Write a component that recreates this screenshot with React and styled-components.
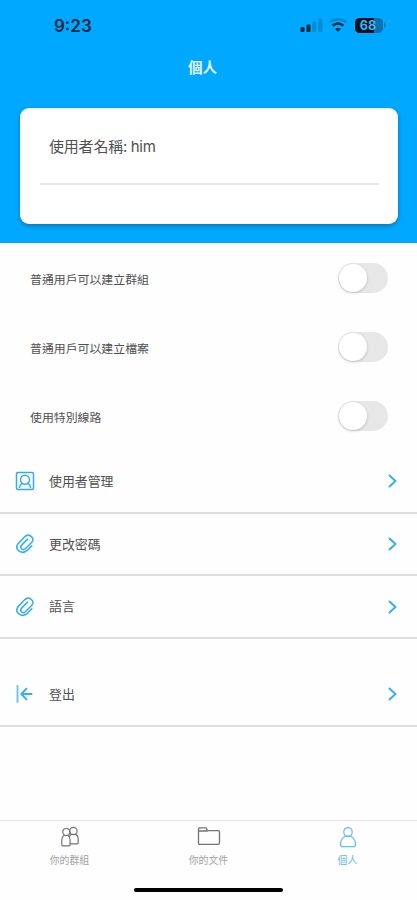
import React, { useState } from "react";
import styled, { createGlobalStyle } from "styled-components";

const GlobalStyle = createGlobalStyle`
  * {
    box-sizing: border-box;
  }
  body {
    margin: 0;
    background: #fefefe;
    font-family: Inter, "Noto Sans CJK TC", sans-serif;
    color: #505050;
  }
`;

const Screen = styled.div`
  display: flex;
  flex-direction: column;
  width: 417px;
  height: 900px;
  overflow: hidden;
`;

const Header = styled.header`
  display: flex;
  flex-direction: column;
  height: 243px;
  background: #00a9ff;
`;

const StatusBar = styled.div`
  display: flex;
  align-items: center;
  justify-content: space-between;
  height: 50px;
  padding: 0 30px 0 54px;
`;

const Clock = styled.span`
  color: #06283f;
  font-size: 17px;
  font-weight: 600;
  line-height: 20px;
  padding-top: 1px;
`;

const StatusIcons = styled.div`
  display: flex;
  align-items: center;
`;

const Title = styled.h1`
  margin: 0;
  padding: 1px 12px 0 0;
  height: 34px;
  line-height: 34px;
  color: #e6f6ff;
  font-size: 14.5px;
  font-weight: 700;
  text-align: center;
`;

const Card = styled.section`
  height: 116px;
  margin: 24px 19px 0 20px;
  padding: 0 20px;
  background: #fff;
  border-radius: 9px;
  box-shadow: 0 2px 4px rgba(30, 70, 110, 0.5);
`;

const UserName = styled.p`
  margin: 0;
  height: 77px;
  padding: 0 9px;
  line-height: 78px;
  border-bottom: 2px solid #e6e6e6;
  font-size: 15px;
  letter-spacing: -0.2px;
  word-spacing: -0.5px;
`;

const Settings = styled.section`
  display: flex;
  flex-direction: column;
`;

const SettingRow = styled.div`
  display: flex;
  align-items: center;
  justify-content: space-between;
  height: 69px;
  padding: 2px 29px 0 30px;
  font-size: 11.9px;
`;

const Switch = styled.button`
  width: 50px;
  height: 30px;
  margin-bottom: 1px;
  padding: 1px;
  border: 0;
  border-radius: 15px;
  background: ${(props) => (props.$on ? "#00a9ff" : "#e7e7e7")};
`;

const Knob = styled.span`
  display: block;
  width: 28px;
  height: 28px;
  margin-left: ${(props) => (props.$on ? "20px" : "0")};
  border-radius: 50%;
  background: #fff;
  box-shadow: 0 1px 3px rgba(0, 0, 0, 0.2);
`;

const MenuRow = styled.div`
  display: flex;
  align-items: center;
  height: ${(props) => props.$height || 62}px;
  margin-top: ${(props) => props.$gap || 0}px;
  padding: 0 19px 0 15px;
  border-bottom: 2px solid #dedede;
  font-size: 12.9px;
`;

const MenuLabel = styled.span`
  flex: 1;
  margin-left: 14px;
  padding-top: 1px;
  line-height: 20px;
`;

const TabBar = styled.nav`
  display: flex;
  height: 60px;
  margin-top: auto;
  border-top: 1px solid #e5e5e5;
`;

const Tab = styled.div`
  flex: 1;
  display: flex;
  flex-direction: column;
  align-items: center;
  padding-top: 5px;
  color: ${(props) => (props.$active ? "#62b6f5" : "#a3a3a3")};
  font-size: 9.9px;
  line-height: 14px;

  svg {
    margin-bottom: 5px;
    color: ${(props) => (props.$active ? "#6cbcf8" : "#737373")};
  }
`;

const HomeArea = styled.div`
  display: flex;
  justify-content: center;
  height: 20px;
  padding-top: 8px;
`;

const HomeIndicator = styled.div`
  width: 149px;
  height: 4px;
  border-radius: 2px;
  background: #000;
`;

const Battery = styled.span`
  display: flex;
  align-items: center;
  justify-content: center;
  width: 28px;
  height: 15px;
  margin-left: 7px;
  padding-right: 2px;
  border-radius: 4.5px;
  background: linear-gradient(90deg, #03121d 68%, #0874ae 68%);
  color: #43b5f3;
  font-size: 12.5px;
  font-weight: 700;
  line-height: 15px;
`;

const lineProps = {
  fill: "none",
  stroke: "currentColor",
  strokeLinecap: "round",
  strokeLinejoin: "round"
};

function SignalIcon() {
  return (
    <svg width="23" height="16" viewBox="0 0 23 16">
      <rect x="0.5" y="10" width="4" height="5" rx="1" fill="#04263b" />
      <rect x="6.5" y="7.5" width="4" height="7.5" rx="1" fill="#04263b" />
      <rect x="12.3" y="4.5" width="4" height="10.5" rx="1" fill="#078bd0" />
      <rect x="18.3" y="1.5" width="4" height="13.5" rx="1" fill="#078bd0" />
    </svg>
  );
}

function WifiIcon() {
  return (
    <svg width="20" height="16" viewBox="-1 0 20 16" style={{ marginLeft: 5 }}>
      <path d="M.6 5.4C5 1.2 13 1.2 17.4 5.4" fill="none" stroke="#078bd0" strokeWidth="2.4" />
      <path d="M3.7 8.600C6.700 5.700 11.300 5.700 14.300 8.600" fill="none" stroke="#04263b" strokeWidth="2.500" />
      <path d="M6.200 12C7.800 10.500 10.200 10.500 11.800 12L9 14.800Z" fill="#04263b" />
    </svg>
  );
}

function BatteryTip() {
  return (
    <svg width="3" height="6" viewBox="0 0 3 6" style={{ marginLeft: 1 }}>
      <path d="M0 .5C2.700 1 2.700 5 0 5.500Z" fill="#0879b8" />
    </svg>
  );
}

function UserFrameIcon() {
  return (
    <svg width="20" height="20" viewBox="0 0 20 20" color="#30adf5" strokeWidth="1.500" {...lineProps}>
      <rect x="1.500" y="1.500" width="17" height="17" rx="1.500" />
      <circle cx="10" cy="8.700" r="4.500" />
      <path d="M4.500 16.500c.3-2.200 1.200-3.500 2.800-4.300M15.500 16.500c-.3-2.200-1.200-3.500-2.800-4.300" />
    </svg>
  );
}

function ClipIcon() {
  return (
    <svg width="20" height="20" viewBox="0 0 20 20" color="#35aef4" strokeWidth="1.600" {...lineProps}>
      <path d="M16.800 11.800L12.700 16C7.200 21.500-1.400 15.700 3 9.700L9.400 3C13.600-1.200 20.900 3.500 16.600 8.500L10.600 14.500C7.400 17.200 4.200 13.700 6.800 10.900L12.500 5.200" />
    </svg>
  );
}

function LogoutIcon() {
  return (
    <svg width="20" height="20" viewBox="0 0 20 20" color="#30adf5" strokeWidth="1.900" {...lineProps}>
      <path d="M2.500 2v16" stroke="#72c5f8" strokeWidth="2" />
      <path d="M16.500 10H6.500M11.500 4.700L6.300 10l5.200 5.300" />
    </svg>
  );
}

function ChevronIcon() {
  return (
    <svg width="11" height="16" viewBox="0 0 11 16" color="#30adf5" strokeWidth="1.900" {...lineProps}>
      <path d="M2.500 2.500L8.500 8l-6 5.500" />
    </svg>
  );
}

function GroupIcon() {
  return (
    <svg width="22" height="22" viewBox="0 0 22 22" strokeWidth="1.200" {...lineProps}>
      <circle cx="7.300" cy="6" r="3.500" />
      <circle cx="14.400" cy="5" r="3.700" />
      <path d="M5 9.500C3.500 10.300 2.800 11.800 2.800 14v4.800q0 1 1 1h6.300q1 0 1-1V14c0-2.200-.7-3.700-2.200-4.500z" />
      <path d="M11.200 17.800h7q1 0 1-1V12.500c0-2.200-.8-3.300-2.400-4.100h-4.300c-1 .5-1.700 1.200-2 2.200" />
    </svg>
  );
}

function FolderIcon() {
  return (
    <svg width="24" height="22" viewBox="0 0 24 22" strokeWidth="1.300" {...lineProps}>
      <path d="M1.500 17V3.200q0-1.300 1.300-1.300h5.700q1 0 1.200.8l.6 1.900h10.900q1.300 0 1.300 1.300V17q0 1.300-1.300 1.300H2.800Q1.500 18.300 1.500 17zM1.700 5h8.600" />
    </svg>
  );
}

function PersonIcon() {
  return (
    <svg width="20" height="22" viewBox="0 0 20 22" strokeWidth="1.300" {...lineProps}>
      <ellipse cx="10" cy="6" rx="4.200" ry="4.500" />
      <path d="M7.200 10.200C4.200 11.800 2.500 14.700 2.500 18.500q0 2.200 2 2.200h11q2 0 2-2.200c0-3.800-1.700-6.700-4.700-8.300z" />
    </svg>
  );
}

const settings = ["普通用戶可以建立群組", "普通用戶可以建立檔案", "使用特別線路"];

const menu = [
  { label: "使用者管理", icon: UserFrameIcon, height: 64 },
  { label: "更改密碼", icon: ClipIcon, height: 62 },
  { label: "語言", icon: ClipIcon, height: 63 },
  { label: "登出", icon: LogoutIcon, height: 64, gap: 24 }
];

const tabs = [
  { label: "你的群組", icon: GroupIcon },
  { label: "你的文件", icon: FolderIcon },
  { label: "個人", icon: PersonIcon }
];

function SettingSwitch({ label }) {
  const [on, setOn] = useState(false);

  return (
    <SettingRow>
      <span>{label}</span>
      <Switch role="switch" aria-checked={on} aria-label={label} $on={on} onClick={() => setOn(!on)}>
        <Knob $on={on} />
      </Switch>
    </SettingRow>
  );
}

export default function App() {
  const [activeTab, setActiveTab] = useState(2);

  return (
    <Screen>
      <GlobalStyle />
      <Header>
        <StatusBar>
          <Clock>9:23</Clock>
          <StatusIcons>
            <SignalIcon />
            <WifiIcon />
            <Battery>68</Battery>
            <BatteryTip />
          </StatusIcons>
        </StatusBar>
        <Title>個人</Title>
        <Card>
          <UserName>使用者名稱: him</UserName>
        </Card>
      </Header>
      <Settings>
        {settings.map((label) => (
          <SettingSwitch key={label} label={label} />
        ))}
      </Settings>
      {menu.map(({ label, icon: Icon, height, gap }) => (
        <MenuRow key={label} $height={height} $gap={gap}>
          <Icon />
          <MenuLabel>{label}</MenuLabel>
          <ChevronIcon />
        </MenuRow>
      ))}
      <TabBar>
        {tabs.map(({ label, icon: Icon }, index) => (
          <Tab key={label} $active={index === activeTab} onClick={() => setActiveTab(index)}>
            <Icon />
            {label}
          </Tab>
        ))}
      </TabBar>
      <HomeArea>
        <HomeIndicator />
      </HomeArea>
    </Screen>
  );
}
